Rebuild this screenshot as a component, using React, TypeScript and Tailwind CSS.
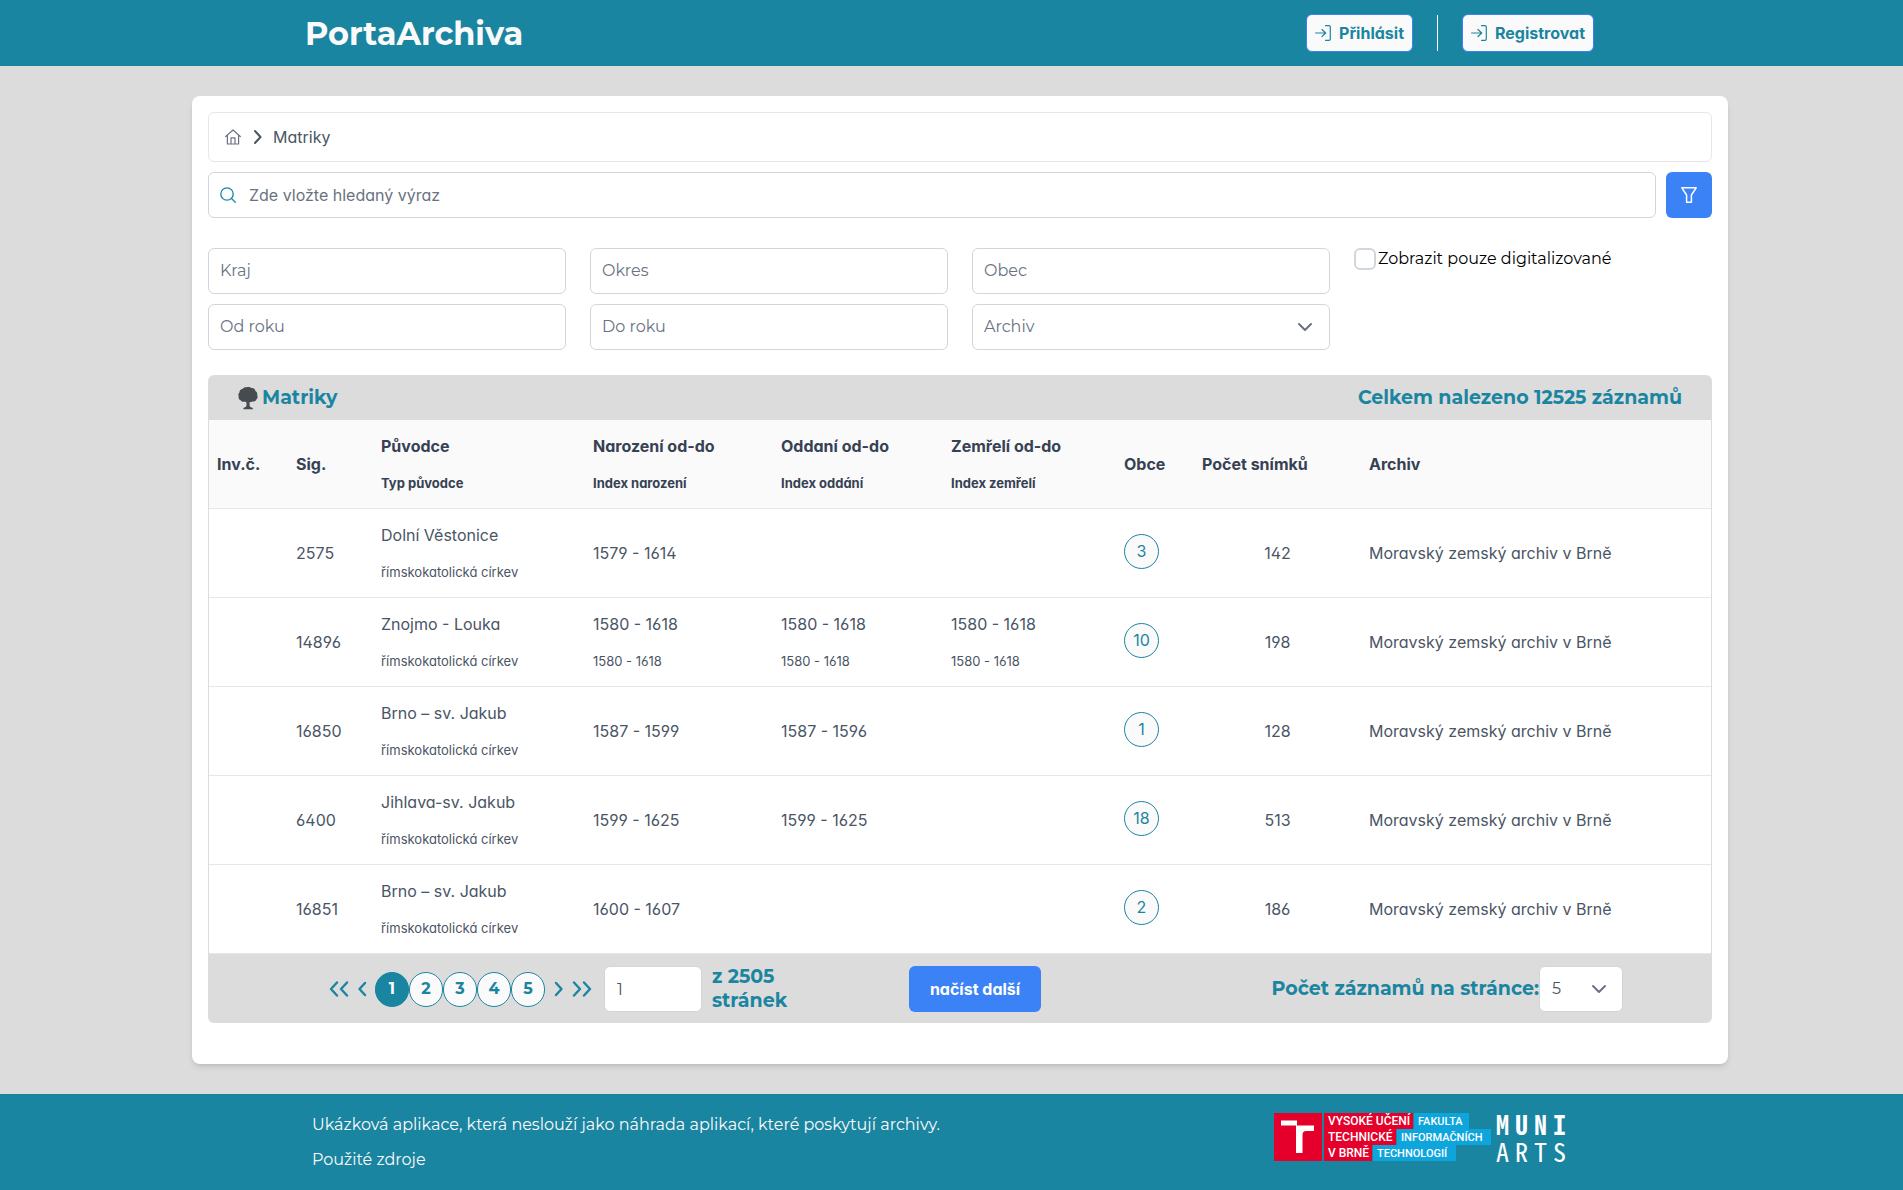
import React from "react";

const MONT = "font-['Montserrat',Inter,'Open_Sans',sans-serif]";

const rows = [
  { sig: "2575", name: "Dolní Věstonice", born: ["1579 - 1614"], wed: [], died: [], places: 3, shots: 142 },
  { sig: "14896", name: "Znojmo - Louka", born: ["1580 - 1618", "1580 - 1618"], wed: ["1580 - 1618", "1580 - 1618"], died: ["1580 - 1618", "1580 - 1618"], places: 10, shots: 198 },
  { sig: "16850", name: "Brno – sv. Jakub", born: ["1587 - 1599"], wed: ["1587 - 1596"], died: [], places: 1, shots: 128 },
  { sig: "6400", name: "Jihlava-sv. Jakub", born: ["1599 - 1625"], wed: ["1599 - 1625"], died: [], places: 18, shots: 513 },
  { sig: "16851", name: "Brno – sv. Jakub", born: ["1600 - 1607"], wed: [], died: [], places: 2, shots: 186 },
];

function Chevron({ dir, className }: { dir: "left" | "right" | "down"; className?: string }) {
  const d = { left: "M10 2 4.500 8 10 14", right: "M6 2 11.500 8 6 14", down: "M2 5 8 11 14 5" }[dir];
  return (
    <svg viewBox="0 0 16 16" fill="none" stroke="currentColor" strokeWidth="2" strokeLinecap="round" strokeLinejoin="round" className={className} aria-hidden="true">
      <path d={d} />
    </svg>
  );
}

function DoubleChevron({ dir }: { dir: "left" | "right" }) {
  return (
    <svg viewBox="0 0 20 16" fill="none" stroke="currentColor" strokeWidth="2.400" strokeLinecap="round" strokeLinejoin="round" className="h-4 w-5" aria-hidden="true">
      <path d={dir === "left" ? "M8 1.500 2 8 8 14.500M18 1.500 12 8 18 14.500" : "M2 1.500 8 8 2 14.500M12 1.500 18 8 12 14.500"} />
    </svg>
  );
}

function SignIn() {
  return (
    <svg viewBox="0 0 16 16" fill="none" stroke="currentColor" strokeWidth="1.200" strokeLinecap="round" strokeLinejoin="round" className="size-4" aria-hidden="true">
      <path d="M.6 8H10.500M7 4.500 10.700 8 7 11.500M10.500.7H14Q15.300.7 15.300 2V14Q15.300 15.300 14 15.300H10.500" />
    </svg>
  );
}

function HeaderButton({ children }: { children: React.ReactNode }) {
  return (
    <button type="button" className="flex h-[38px] items-center gap-2 rounded-md border border-[#3b82f6] bg-[#fafafa] px-2 text-base font-bold text-[#1a85a1]">
      <SignIn />
      {children}
    </button>
  );
}

function Tree() {
  return (
    <svg viewBox="0 0 20 24" fill="#474b4f" className="h-6 w-5" aria-hidden="true">
      <path d="M8.500 1.200C10 .6 12.400.9 13.600 2 15.600 1.900 17.200 3.200 17.400 5 18.900 5.800 19.600 7.400 19.100 9 20 10.400 19.800 12.400 18.400 13.400 17.800 15 16 15.900 14.300 15.400 13.400 16.100 12.400 16.300 11.600 16V19.600C11.800 21 13 21.500 14.800 22V23.200H5.400V22C7 21.500 8.200 21 8.500 19.600L8.400 16.600 7 15.400C5.400 16 3.400 15.600 2.600 14.200 1 13.600.2 12 .8 10.400 0 9 .2 7.400 1.500 6.400 1.300 4.600 2.600 3 4.500 2.900 5.400 1.600 7 .9 8.500 1.200Z" />
    </svg>
  );
}

const field = "h-[46px] w-full rounded-md border border-gray-300 bg-white px-[11px] text-base placeholder:text-gray-500";

function Field({ label }: { label: string }) {
  return <input type="text" aria-label={label} placeholder={label} className={`${field} ${MONT} pb-[2px] text-gray-600`} />;
}

function Stack({ top, bottom }: { top?: string; bottom?: string }) {
  return (
    <div className="flex flex-col gap-[17px]">
      <span className="leading-5">{top}</span>
      {bottom && <span className="text-[13px] leading-5">{bottom}</span>}
    </div>
  );
}

function VutLogo() {
  const lines = [
    { y: 0, red: "VYSOKÉ UČENÍ", rw: 89, blue: "FAKULTA", bw: 55 },
    { y: 16, red: "TECHNICKÉ", rw: 72, blue: "INFORMAČNÍCH", bw: 94 },
    { y: 32, red: "V BRNĚ", rw: 48, blue: "TECHNOLOGIÍ", bw: 83 },
  ];
  return (
    <svg viewBox="0 0 217 48" className="h-12 w-[217px]" role="img" aria-label="VUT FIT">
      <rect width="48" height="48" fill="#e4002b" />
      <path fill="#fff" d="M7 7.500H23V12.500H40V18H32Q28.500 18 28.500 22V40H22V12.500H7Z" />
      {lines.map((l) => (
        <g key={l.y} className="font-[Roboto,sans-serif] font-medium" fill="#fff">
          <rect x="50" y={l.y} width={l.rw} height="16" fill="#e4002b" />
          <rect x={51 + l.rw} y={l.y} width={l.bw} height="16" fill="#0ea5dd" />
          <text x="54" y={l.y + 12} className="text-[12px]">{l.red}</text>
          <text x={55 + l.rw} y={l.y + 12} className="text-[11px]">{l.blue}</text>
        </g>
      ))}
    </svg>
  );
}

function MuniLogo() {
  return (
    <div className="grid grid-cols-[repeat(4,19px)] justify-items-center font-['Noto_Sans_Mono_CJK_SC','Liberation_Mono',monospace] text-[26px] leading-[27px] text-white">
      {"MUNI".split("").map((c) => <span key={c} className="font-bold">{c}</span>)}
      {"ARTS".split("").map((c) => <span key={c}>{c}</span>)}
    </div>
  );
}

export default function App() {
  return (
    <div className="flex min-h-screen flex-col bg-[#dcdcdc] font-[Inter,sans-serif] text-base text-gray-600 [font-feature-settings:'cv02','cv03','cv04','cv11']">
      <header className="flex h-[66px] items-center justify-between bg-[#1a85a1] pr-[309px] pl-[305px]">
        <h1 className={`pt-[2px] text-[32px] font-bold text-[#fafafa] ${MONT}`}>PortaArchiva</h1>
        <div className="flex items-center gap-6">
          <HeaderButton>Přihlásit</HeaderButton>
          <div className="h-9 w-px bg-white" />
          <HeaderButton>Registrovat</HeaderButton>
        </div>
      </header>

      <div className="grow py-[30px] pl-[17px]">
        <main className="mx-auto max-w-screen-2xl rounded-lg bg-white px-4 pt-4 pb-[41px] shadow-md">
          <nav aria-label="Breadcrumb" className="flex h-[50px] items-center gap-2 rounded-md border border-gray-200 px-4">
            <a href="#" aria-label="Domů" className="text-gray-500">
              <svg viewBox="0 0 16 16" fill="none" stroke="currentColor" strokeWidth="1.200" strokeLinejoin="round" strokeLinecap="round" className="size-4">
                <path d="M.7 7.500 8 1 15.300 7.500M2.400 6.200V15H13.600V6.200M6 15V8.800H10V15" />
              </svg>
            </a>
            <Chevron dir="right" className="size-4" />
            <span>Matriky</span>
          </nav>

          <div className="mt-[10px] flex gap-[10px]">
            <label className={`${field} flex items-center gap-[13px] text-gray-600`}>
              <svg viewBox="0 0 16 16" fill="none" stroke="#1a85a1" strokeWidth="1.300" strokeLinecap="round" className="size-4 shrink-0" aria-hidden="true">
                <circle cx="7" cy="7" r="6.200" />
                <path d="m11.500 11.500 3.800 3.800" />
              </svg>
              <input type="text" aria-label="Hledat" placeholder="Zde vložte hledaný výraz" className="grow placeholder:text-gray-500" />
            </label>
            <button type="button" aria-label="Filtr" className="flex size-[46px] shrink-0 items-center justify-center rounded-md bg-[#3b82f6] text-white">
              <svg viewBox="0 0 16 16" fill="none" stroke="currentColor" strokeWidth="1.500" strokeLinejoin="round" className="size-4" aria-hidden="true">
                <path d="M.8.8H15.200L10.400 8V15.200H5.600V8Z" />
              </svg>
            </button>
          </div>

          <div className="mt-[30px] grid grid-cols-4 gap-x-6 gap-y-[10px]">
            <Field label="Kraj" />
            <Field label="Okres" />
            <Field label="Obec" />
            <label className={`flex h-[22px] items-center gap-[2px] text-black ${MONT}`}>
              <input type="checkbox" className="size-[22px] appearance-none rounded-md border-2 border-gray-300 bg-white" />
              Zobrazit pouze digitalizované
            </label>
            <Field label="Od roku" />
            <Field label="Do roku" />
            <div className="relative">
              <select aria-label="Archiv" className={`${field} ${MONT} appearance-none text-gray-500`}>
                <option>Archiv</option>
              </select>
              <Chevron dir="down" className="pointer-events-none absolute top-[15px] right-[17px] size-4 text-gray-500" />
            </div>
          </div>

          <section className="mt-[25px] overflow-hidden rounded-md">
            <div className={`flex h-[45px] items-center justify-between bg-[#dcdcdc] px-[30px] text-[19px] font-bold text-[#1a85a1] ${MONT}`}>
              <h2 className="flex items-center gap-1"><Tree /><span className="pt-[2px]">Matriky</span></h2>
              <span className="pt-[2px]">Celkem nalezeno 12525 záznamů</span>
            </div>
            <div className="border-x border-[#dcdcdc]">
              <table className="w-full table-fixed border-collapse text-left">
                <colgroup>
                  <col className="w-[79px]" />
                  <col className="w-[85px]" />
                  <col className="w-[212px]" />
                  <col className="w-[188px]" />
                  <col className="w-[170px]" />
                  <col className="w-[173px]" />
                  <col className="w-[78px]" />
                  <col className="w-[167px]" />
                  <col />
                </colgroup>
                <thead>
                  <tr className="h-[88px] border-b border-gray-200 bg-[#fafafa] text-gray-700 [&>th]:px-2 [&>th]:pt-px [&>th]:font-bold">
                    <th>Inv.č.</th>
                    <th>Sig.</th>
                    <th><Stack top="Původce" bottom="Typ původce" /></th>
                    <th><Stack top="Narození od-do" bottom="Index narození" /></th>
                    <th><Stack top="Oddaní od-do" bottom="Index oddání" /></th>
                    <th><Stack top="Zemřelí od-do" bottom="Index zemřelí" /></th>
                    <th>Obce</th>
                    <th>Počet snímků</th>
                    <th>Archiv</th>
                  </tr>
                </thead>
                <tbody>
                  {rows.map((r) => (
                    <tr key={r.sig} className="h-[89px] border-b border-gray-200 [&>td]:px-2">
                      <td />
                      <td>{r.sig}</td>
                      <td className="pt-[2px]"><Stack top={r.name} bottom="římskokatolická církev" /></td>
                      <td className={r.born[1] && "pt-[2px]"}><Stack top={r.born[0]} bottom={r.born[1]} /></td>
                      <td className={r.wed[1] && "pt-[2px]"}><Stack top={r.wed[0]} bottom={r.wed[1]} /></td>
                      <td className={r.died[1] && "pt-[2px]"}><Stack top={r.died[0]} bottom={r.died[1]} /></td>
                      <td className="pb-[3px]">
                        <button type="button" className="flex size-[35px] items-center justify-center rounded-full border border-[#1a85a1] bg-[#fafafa] text-[#1a85a1]">{r.places}</button>
                      </td>
                      <td className="text-center">{r.shots}</td>
                      <td>Moravský zemský archiv v Brně</td>
                    </tr>
                  ))}
                </tbody>
              </table>
            </div>
            <div className={`flex h-[69px] items-center justify-between bg-[#dcdcdc] pt-[2px] pr-[89px] pl-[121px] text-[19px] leading-6 font-bold text-[#1a85a1] ${MONT}`}>
              <div className="flex items-center">
                <nav aria-label="Stránkování" className="flex items-center">
                  <button type="button" aria-label="První stránka" className="mr-[6px]"><DoubleChevron dir="left" /></button>
                  <button type="button" aria-label="Předchozí stránka" className="mr-1"><Chevron dir="left" className="size-4 stroke-[2.4]" /></button>
                  {[1, 2, 3, 4, 5].map((n) => (
                    <button key={n} type="button" className={`flex h-[35px] w-[34px] items-center justify-center rounded-full border border-[#1a85a1] text-base ${n === 1 ? "bg-[#1a85a1] text-[#fafafa]" : "bg-[#fafafa]"}`}>{n}</button>
                  ))}
                  <button type="button" aria-label="Další stránka" className="ml-[5px]"><Chevron dir="right" className="size-4 stroke-[2.4]" /></button>
                  <button type="button" aria-label="Poslední stránka" className="ml-[6px]"><DoubleChevron dir="right" /></button>
                </nav>
                <input type="text" aria-label="Stránka" defaultValue="1" className="mr-[10px] ml-3 h-[46px] w-[98px] rounded-md border border-gray-300 bg-white px-3 text-base font-normal text-gray-600" />
                <span className="w-[78px]">z 2505 stránek</span>
                <button type="button" className="ml-[119px] h-[46px] w-[132px] rounded-md bg-[#3b82f6] font-[Inter,sans-serif] text-base font-bold text-white">načíst další</button>
              </div>
              <label className="flex items-center">
                Počet záznamů na stránce:
                <span className="relative">
                  <select className="h-[46px] w-[84px] appearance-none rounded-md border border-gray-300 bg-white px-3 text-base font-normal text-gray-600">
                    <option>5</option>
                  </select>
                  <Chevron dir="down" className="pointer-events-none absolute top-[15px] right-4 size-4 text-gray-500" />
                </span>
              </label>
            </div>
          </section>
        </main>
      </div>

      <footer className={`flex h-24 items-start justify-between bg-[#1a85a1] pr-[335px] pl-[312px] text-[#fafafa] ${MONT}`}>
        <div className="flex flex-col gap-[11px] pt-[19px]">
          <p>Ukázková aplikace, která neslouží jako náhrada aplikací, které poskytují archivy.</p>
          <a href="#">Použité zdroje</a>
        </div>
        <div className="-mr-px flex items-center gap-[2px] pt-[16px]">
          <VutLogo />
          <MuniLogo />
        </div>
      </footer>
    </div>
  );
}
